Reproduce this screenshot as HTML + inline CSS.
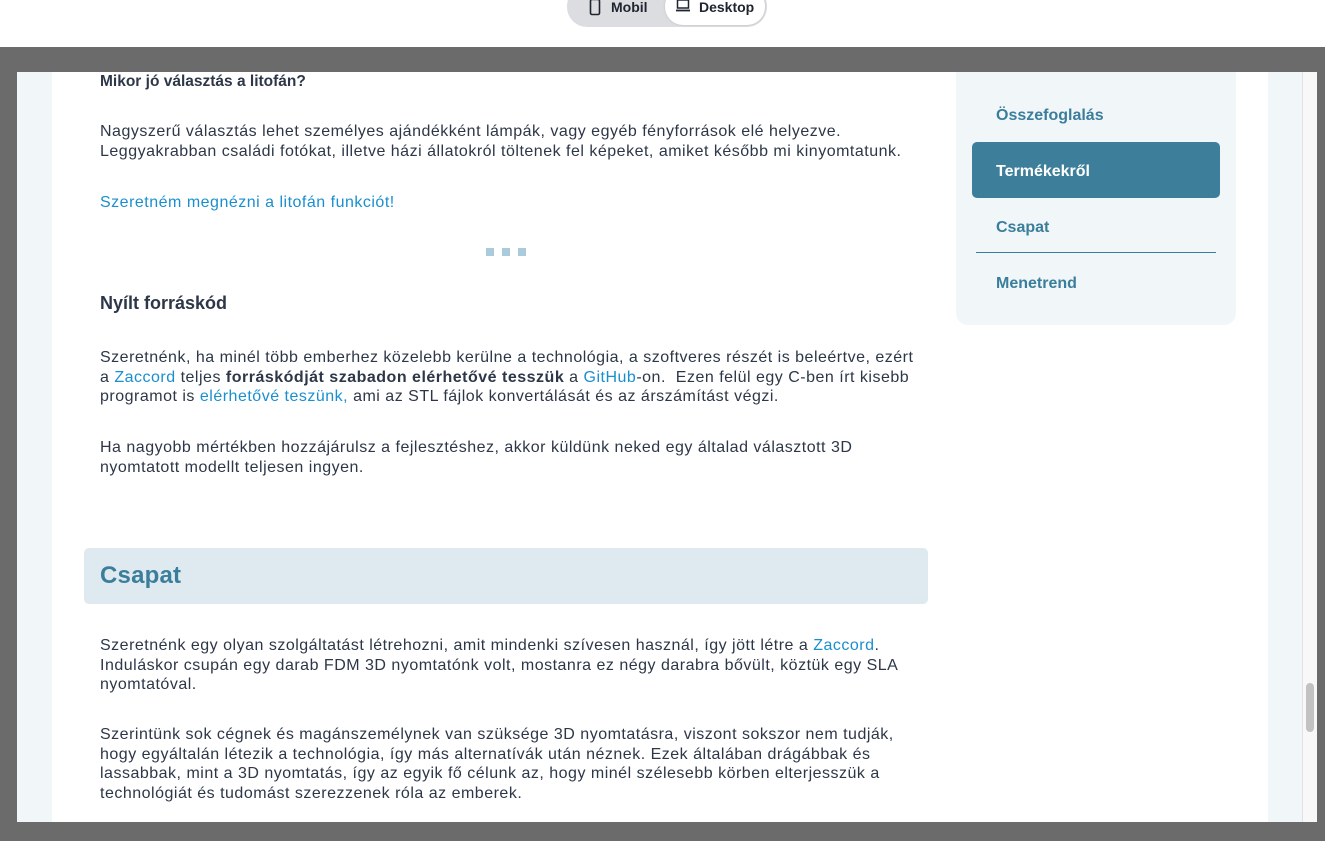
<!DOCTYPE html>
<html><head><meta charset="utf-8"><style>
*{margin:0;padding:0;box-sizing:border-box}
body{width:1325px;height:841px;background:#fff;position:relative;overflow:hidden;font-family:"Liberation Sans",sans-serif;color:#2d3748}
.top{position:absolute;left:0;top:0;width:1325px;height:47px;background:#fff}
.tog{position:absolute;left:567px;top:-14px;width:200px;height:41px;background:#dcdde0;border-radius:20px}
.tog .d{position:absolute;left:98px;top:2px;width:100px;height:37px;background:#fff;border-radius:18px;box-shadow:0 0 2px #bbb}
.tog span{position:absolute;top:13px;font-weight:bold;font-size:14px;color:#1f2430}
.frame{position:absolute;left:0;top:47px;width:1325px;height:794px;background:#6b6b6b}
.page{position:absolute;left:17px;top:72px;width:1300px;height:750px;background:#fff;overflow:hidden}
.ls{position:absolute;left:0;top:0;width:35px;height:750px;background:#f1f6f9}
.rs{position:absolute;left:1251px;top:0;width:34px;height:750px;background:#f1f6f9}
.sb{position:absolute;left:1285px;top:0;width:15px;height:750px;background:#f8f8f8;border-left:1px solid #e2e2e2}
.th{position:absolute;left:1289px;top:611px;width:8px;height:49px;background:#c2c2c2;border-radius:4px}
p,.h{position:absolute;left:83px;font-size:16px;letter-spacing:0.5px;line-height:19.5px;white-space:nowrap}
.h{letter-spacing:0}
a{color:#1a8fcf;text-decoration:none}
.dot{position:absolute;top:176px;width:8px;height:8px;background:#a9cbdb}
.band{position:absolute;left:67px;top:476px;width:844px;height:56px;background:#dfe9f0;border-radius:5px}
.band div{position:absolute;left:16px;top:14px;font-size:24px;font-weight:bold;color:#3b7e9c;letter-spacing:0.2px}
.nav{position:absolute;left:939px;top:0;width:280px;height:253px;background:#f1f6f9;border-radius:0 0 12px 12px}
.nav .i{position:absolute;left:40px;font-size:16px;font-weight:bold;color:#3b7e9c}
.act{position:absolute;left:16px;top:70px;width:248px;height:56px;background:#3d7e9b;border-radius:5px}
</style></head><body>
<div class="top"><div class="tog"><div class="d"></div>
<svg style="position:absolute;left:22px;top:12px" width="12" height="18" viewBox="0 0 12 18"><rect x="1.5" y="1.5" width="9" height="15" rx="1.5" fill="none" stroke="#1f2430" stroke-width="1.6"/></svg>
<span style="left:44px">Mobil</span>
<svg style="position:absolute;left:108px;top:13px" width="16" height="14" viewBox="0 0 16 14"><rect x="2.5" y="1" width="11" height="8" fill="none" stroke="#1f2430" stroke-width="1.5"/><path d="M1 11.5h14" stroke="#1f2430" stroke-width="1.8"/></svg>
<span style="left:132px">Desktop</span></div></div>
<div class="frame"></div>
<div class="page">
<div class="ls"></div><div class="rs"></div><div class="sb"></div><div class="th"></div>
<div class="h" style="top:0px;font-weight:bold;font-size:15.5px">Mikor jó választás a litofán?</div>
<p style="top:50px">Nagyszerű választás lehet személyes ajándékként lámpák, vagy egyéb fényforrások elé helyezve.<br>Leggyakrabban családi fotókat, illetve házi állatokról töltenek fel képeket, amiket később mi kinyomtatunk.</p>
<p style="top:121px"><a>Szeretném megnézni a litofán funkciót!</a></p>
<div class="dot" style="left:469px"></div><div class="dot" style="left:485px"></div><div class="dot" style="left:501px"></div>
<div class="h" style="top:222px;font-weight:bold;font-size:18px">Nyílt forráskód</div>
<p style="top:276px">Szeretnénk, ha minél több emberhez közelebb kerülne a technológia, a szoftveres részét is beleértve, ezért<br>a <a>Zaccord</a> teljes <b>forráskódját szabadon elérhetővé tesszük</b> a <a>GitHub</a>-on.&nbsp; Ezen felül egy C-ben írt kisebb<br>programot is <a>elérhetővé teszünk,</a> ami az STL fájlok konvertálását és az árszámítást végzi.</p>
<p style="top:366px">Ha nagyobb mértékben hozzájárulsz a fejlesztéshez, akkor küldünk neked egy általad választott 3D<br>nyomtatott modellt teljesen ingyen.</p>
<div class="band"><div>Csapat</div></div>
<p style="top:564px">Szeretnénk egy olyan szolgáltatást létrehozni, amit mindenki szívesen használ, így jött létre a <a>Zaccord</a>.<br>Induláskor csupán egy darab FDM 3D nyomtatónk volt, mostanra ez négy darabra bővült, köztük egy SLA<br>nyomtatóval.</p>
<p style="top:653px">Szerintünk sok cégnek és magánszemélynek van szüksége 3D nyomtatásra, viszont sokszor nem tudják,<br>hogy egyáltalán létezik a technológia, így más alternatívák után néznek. Ezek általában drágábbak és<br>lassabbak, mint a 3D nyomtatás, így az egyik fő célunk az, hogy minél szélesebb körben elterjesszük a<br>technológiát és tudomást szerezzenek róla az emberek.</p>
<div class="nav">
<div class="i" style="top:35px">Összefoglalás</div>
<div class="act"></div>
<div class="i" style="top:91px;color:#fff">Termékekről</div>
<div class="i" style="top:147px">Csapat</div>
<div style="position:absolute;left:20px;top:180px;width:240px;height:1px;background:#3b7e9c"></div>
<div class="i" style="top:203px">Menetrend</div>
</div>
</div>
</body></html>
